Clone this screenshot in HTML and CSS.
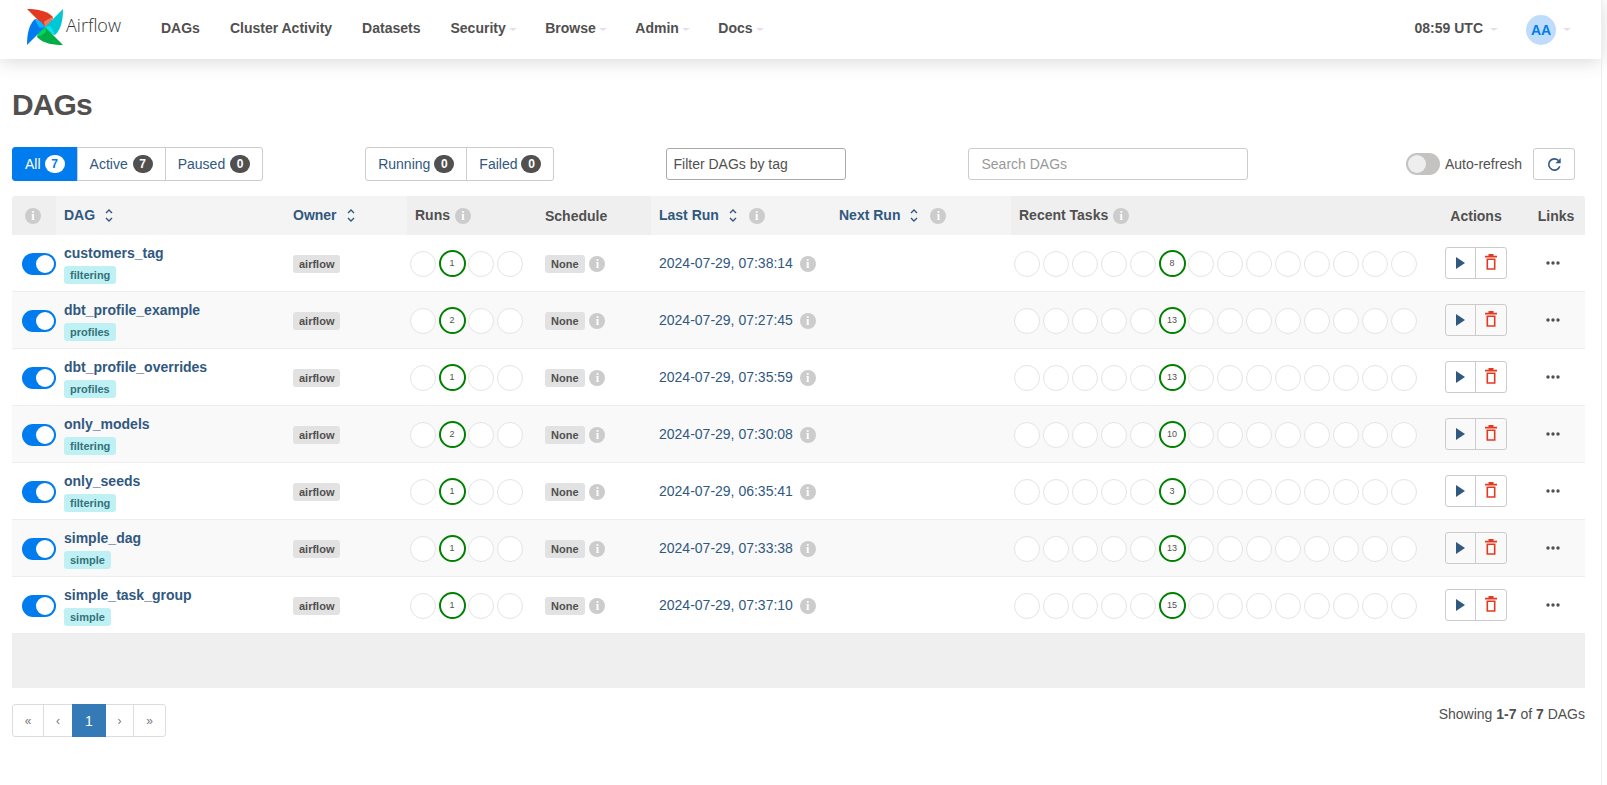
FILE: index.html
```html
<!DOCTYPE html>
<html lang="en">
<head>
<meta charset="utf-8">
<title>DAGs - Airflow</title>
<link rel="stylesheet" href="styles.css">
</head>
<body>
<div class="page">
<nav class="nav">
  <a class="brand">
    <svg class="logo" viewBox="0 0 36 36" width="36" height="36">
      <path fill="#e43921" d="M0 0C8 0 20 1 26 8C25 13 21 16 18 18Z"/>
      <path fill="#f07a5e" d="M26 8C25 13 21 16 18 18L17 13C19 11 23 9 26 8Z"/>
      <path fill="#00c7d4" d="M36 0C36 8 35 20 28 26C23 25 20 21 18 18Z"/>
      <path fill="#11e1ee" d="M28 26C23 25 20 21 18 18L23 17C25 19 27 23 28 26Z"/>
      <path fill="#00ad46" d="M36 36C28 36 16 35 10 28C11 23 15 20 18 18Z"/>
      <path fill="#04d659" d="M10 28C11 23 15 20 18 18L19 23C17 25 13 27 10 28Z"/>
      <path fill="#017cee" d="M0 36C0 28 1 16 8 10C13 11 16 15 18 18Z"/>
      <path fill="#0cb6ff" d="M8 10C13 11 16 15 18 18L13 19C11 17 9 13 8 10Z"/>
    </svg>
    <span class="brand-name">Airflow</span>
  </a>
  <ul class="menu">
    <li>DAGs</li>
    <li>Cluster Activity</li>
    <li>Datasets</li>
    <li class="has-caret">Security</li>
    <li class="has-caret">Browse</li>
    <li class="has-caret">Admin</li>
    <li class="has-caret">Docs</li>
  </ul>
  <div class="nav-right">
    <span class="clock has-caret">08:59 UTC</span>
    <span class="user has-caret"><span class="avatar">AA</span></span>
  </div>
</nav>

<main class="main">
  <h1 class="title">DAGs</h1>
  <div class="toolbar">
    <div class="group group-status">
      <a class="seg seg-on">All <span class="badge badge-on">7</span></a>
      <a class="seg">Active <span class="badge">7</span></a>
      <a class="seg">Paused <span class="badge">0</span></a>
    </div>
    <div class="group group-runs">
      <a class="seg">Running <span class="badge">0</span></a>
      <a class="seg">Failed <span class="badge">0</span></a>
    </div>
    <input class="field field-tag" placeholder="Filter DAGs by tag">
    <input class="field field-search" placeholder="Search DAGs">
    <div class="refresh">
      <span class="switch"><span class="switch-knob"></span></span>
      <span class="refresh-label">Auto-refresh</span>
      <button class="refresh-btn" aria-label="Refresh">
        <svg viewBox="0 0 16 16" width="15" height="15"><path fill="none" stroke="#31587f" stroke-width="1.7" d="M13.6 9.8A6 6 0 1 1 12 3.6"/><path fill="#31587f" d="M14.6 1v5.6H9z"/></svg>
      </button>
    </div>
  </div>

  <div class="table-box">
    <table class="dags">
      <colgroup>
        <col class="c-info"><col class="c-dag"><col class="c-owner"><col class="c-runs"><col class="c-sched"><col class="c-last"><col class="c-next"><col class="c-tasks"><col class="c-act"><col class="c-links">
      </colgroup>
      <thead>
        <tr>
          <th class="th-first"><i class="info">i</i></th>
          <th class="th-sort"><a class="sortable">DAG<svg class="sort" viewBox="0 0 8 15" width="8" height="15"><path d="M1 5l3-3 3 3M1 10l3 3 3-3"/></svg></a></th>
          <th class="th-sort"><a class="sortable">Owner<svg class="sort" viewBox="0 0 8 15" width="8" height="15"><path d="M1 5l3-3 3 3M1 10l3 3 3-3"/></svg></a></th>
          <th>Runs <i class="info">i</i></th>
          <th class="th-plain">Schedule</th>
          <th class="th-sort"><a class="sortable">Last Run<svg class="sort" viewBox="0 0 8 15" width="8" height="15"><path d="M1 5l3-3 3 3M1 10l3 3 3-3"/></svg></a> <i class="info info-far">i</i></th>
          <th class="th-sort"><a class="sortable">Next Run<svg class="sort" viewBox="0 0 8 15" width="8" height="15"><path d="M1 5l3-3 3 3M1 10l3 3 3-3"/></svg></a> <i class="info info-far">i</i></th>
          <th>Recent Tasks <i class="info">i</i></th>
          <th class="th-plain center">Actions</th>
          <th class="th-plain center">Links</th>
        </tr>
      </thead>
      <tbody>
        <tr>
          <td class="td-toggle"><span class="toggle"><span class="toggle-knob"></span></span></td>
          <td class="td-name"><a class="dag-name">customers_tag</a><span class="tag">filtering</span></td>
          <td><span class="label">airflow</span></td>
          <td class="td-dots"><div class="dots"><span class="dot"></span><span class="dot dot-ok">1</span><span class="dot"></span><span class="dot"></span></div></td>
          <td><span class="label">None</span> <i class="info">i</i></td>
          <td><a class="date">2024-07-29, 07:38:14</a> <i class="info info-date">i</i></td>
          <td></td>
          <td class="td-dots"><div class="dots"><span class="dot"></span><span class="dot"></span><span class="dot"></span><span class="dot"></span><span class="dot"></span><span class="dot dot-ok">8</span><span class="dot"></span><span class="dot"></span><span class="dot"></span><span class="dot"></span><span class="dot"></span><span class="dot"></span><span class="dot"></span><span class="dot"></span></div></td>
          <td class="center"><div class="acts"><a class="act act-run"><svg viewBox="0 0 9 12" width="9" height="12"><path fill="#31587f" d="M0 0l9 6-9 6z"/></svg></a><a class="act act-del"><svg viewBox="0 0 12 16" width="12" height="16"><path fill="none" stroke="#e43921" stroke-width="1.6" d="M2.3 5.2h7.4v9.8H2.3zM0 2.6h12"/><path fill="#e43921" d="M3.5 0h5v2h-5z"/></svg></a></div></td>
          <td class="center"><svg class="more" viewBox="0 0 14 4" width="14" height="4"><circle cx="2" cy="2" r="1.7"/><circle cx="7" cy="2" r="1.7"/><circle cx="12" cy="2" r="1.7"/></svg></td>
        </tr>
        <tr>
          <td class="td-toggle"><span class="toggle"><span class="toggle-knob"></span></span></td>
          <td class="td-name"><a class="dag-name">dbt_profile_example</a><span class="tag">profiles</span></td>
          <td><span class="label">airflow</span></td>
          <td class="td-dots"><div class="dots"><span class="dot"></span><span class="dot dot-ok">2</span><span class="dot"></span><span class="dot"></span></div></td>
          <td><span class="label">None</span> <i class="info">i</i></td>
          <td><a class="date">2024-07-29, 07:27:45</a> <i class="info info-date">i</i></td>
          <td></td>
          <td class="td-dots"><div class="dots"><span class="dot"></span><span class="dot"></span><span class="dot"></span><span class="dot"></span><span class="dot"></span><span class="dot dot-ok">13</span><span class="dot"></span><span class="dot"></span><span class="dot"></span><span class="dot"></span><span class="dot"></span><span class="dot"></span><span class="dot"></span><span class="dot"></span></div></td>
          <td class="center"><div class="acts"><a class="act act-run"><svg viewBox="0 0 9 12" width="9" height="12"><path fill="#31587f" d="M0 0l9 6-9 6z"/></svg></a><a class="act act-del"><svg viewBox="0 0 12 16" width="12" height="16"><path fill="none" stroke="#e43921" stroke-width="1.6" d="M2.3 5.2h7.4v9.8H2.3zM0 2.6h12"/><path fill="#e43921" d="M3.5 0h5v2h-5z"/></svg></a></div></td>
          <td class="center"><svg class="more" viewBox="0 0 14 4" width="14" height="4"><circle cx="2" cy="2" r="1.7"/><circle cx="7" cy="2" r="1.7"/><circle cx="12" cy="2" r="1.7"/></svg></td>
        </tr>
        <tr>
          <td class="td-toggle"><span class="toggle"><span class="toggle-knob"></span></span></td>
          <td class="td-name"><a class="dag-name">dbt_profile_overrides</a><span class="tag">profiles</span></td>
          <td><span class="label">airflow</span></td>
          <td class="td-dots"><div class="dots"><span class="dot"></span><span class="dot dot-ok">1</span><span class="dot"></span><span class="dot"></span></div></td>
          <td><span class="label">None</span> <i class="info">i</i></td>
          <td><a class="date">2024-07-29, 07:35:59</a> <i class="info info-date">i</i></td>
          <td></td>
          <td class="td-dots"><div class="dots"><span class="dot"></span><span class="dot"></span><span class="dot"></span><span class="dot"></span><span class="dot"></span><span class="dot dot-ok">13</span><span class="dot"></span><span class="dot"></span><span class="dot"></span><span class="dot"></span><span class="dot"></span><span class="dot"></span><span class="dot"></span><span class="dot"></span></div></td>
          <td class="center"><div class="acts"><a class="act act-run"><svg viewBox="0 0 9 12" width="9" height="12"><path fill="#31587f" d="M0 0l9 6-9 6z"/></svg></a><a class="act act-del"><svg viewBox="0 0 12 16" width="12" height="16"><path fill="none" stroke="#e43921" stroke-width="1.6" d="M2.3 5.2h7.4v9.8H2.3zM0 2.6h12"/><path fill="#e43921" d="M3.5 0h5v2h-5z"/></svg></a></div></td>
          <td class="center"><svg class="more" viewBox="0 0 14 4" width="14" height="4"><circle cx="2" cy="2" r="1.7"/><circle cx="7" cy="2" r="1.7"/><circle cx="12" cy="2" r="1.7"/></svg></td>
        </tr>
        <tr>
          <td class="td-toggle"><span class="toggle"><span class="toggle-knob"></span></span></td>
          <td class="td-name"><a class="dag-name">only_models</a><span class="tag">filtering</span></td>
          <td><span class="label">airflow</span></td>
          <td class="td-dots"><div class="dots"><span class="dot"></span><span class="dot dot-ok">2</span><span class="dot"></span><span class="dot"></span></div></td>
          <td><span class="label">None</span> <i class="info">i</i></td>
          <td><a class="date">2024-07-29, 07:30:08</a> <i class="info info-date">i</i></td>
          <td></td>
          <td class="td-dots"><div class="dots"><span class="dot"></span><span class="dot"></span><span class="dot"></span><span class="dot"></span><span class="dot"></span><span class="dot dot-ok">10</span><span class="dot"></span><span class="dot"></span><span class="dot"></span><span class="dot"></span><span class="dot"></span><span class="dot"></span><span class="dot"></span><span class="dot"></span></div></td>
          <td class="center"><div class="acts"><a class="act act-run"><svg viewBox="0 0 9 12" width="9" height="12"><path fill="#31587f" d="M0 0l9 6-9 6z"/></svg></a><a class="act act-del"><svg viewBox="0 0 12 16" width="12" height="16"><path fill="none" stroke="#e43921" stroke-width="1.6" d="M2.3 5.2h7.4v9.8H2.3zM0 2.6h12"/><path fill="#e43921" d="M3.5 0h5v2h-5z"/></svg></a></div></td>
          <td class="center"><svg class="more" viewBox="0 0 14 4" width="14" height="4"><circle cx="2" cy="2" r="1.7"/><circle cx="7" cy="2" r="1.7"/><circle cx="12" cy="2" r="1.7"/></svg></td>
        </tr>
        <tr>
          <td class="td-toggle"><span class="toggle"><span class="toggle-knob"></span></span></td>
          <td class="td-name"><a class="dag-name">only_seeds</a><span class="tag">filtering</span></td>
          <td><span class="label">airflow</span></td>
          <td class="td-dots"><div class="dots"><span class="dot"></span><span class="dot dot-ok">1</span><span class="dot"></span><span class="dot"></span></div></td>
          <td><span class="label">None</span> <i class="info">i</i></td>
          <td><a class="date">2024-07-29, 06:35:41</a> <i class="info info-date">i</i></td>
          <td></td>
          <td class="td-dots"><div class="dots"><span class="dot"></span><span class="dot"></span><span class="dot"></span><span class="dot"></span><span class="dot"></span><span class="dot dot-ok">3</span><span class="dot"></span><span class="dot"></span><span class="dot"></span><span class="dot"></span><span class="dot"></span><span class="dot"></span><span class="dot"></span><span class="dot"></span></div></td>
          <td class="center"><div class="acts"><a class="act act-run"><svg viewBox="0 0 9 12" width="9" height="12"><path fill="#31587f" d="M0 0l9 6-9 6z"/></svg></a><a class="act act-del"><svg viewBox="0 0 12 16" width="12" height="16"><path fill="none" stroke="#e43921" stroke-width="1.6" d="M2.3 5.2h7.4v9.8H2.3zM0 2.6h12"/><path fill="#e43921" d="M3.5 0h5v2h-5z"/></svg></a></div></td>
          <td class="center"><svg class="more" viewBox="0 0 14 4" width="14" height="4"><circle cx="2" cy="2" r="1.7"/><circle cx="7" cy="2" r="1.7"/><circle cx="12" cy="2" r="1.7"/></svg></td>
        </tr>
        <tr>
          <td class="td-toggle"><span class="toggle"><span class="toggle-knob"></span></span></td>
          <td class="td-name"><a class="dag-name">simple_dag</a><span class="tag">simple</span></td>
          <td><span class="label">airflow</span></td>
          <td class="td-dots"><div class="dots"><span class="dot"></span><span class="dot dot-ok">1</span><span class="dot"></span><span class="dot"></span></div></td>
          <td><span class="label">None</span> <i class="info">i</i></td>
          <td><a class="date">2024-07-29, 07:33:38</a> <i class="info info-date">i</i></td>
          <td></td>
          <td class="td-dots"><div class="dots"><span class="dot"></span><span class="dot"></span><span class="dot"></span><span class="dot"></span><span class="dot"></span><span class="dot dot-ok">13</span><span class="dot"></span><span class="dot"></span><span class="dot"></span><span class="dot"></span><span class="dot"></span><span class="dot"></span><span class="dot"></span><span class="dot"></span></div></td>
          <td class="center"><div class="acts"><a class="act act-run"><svg viewBox="0 0 9 12" width="9" height="12"><path fill="#31587f" d="M0 0l9 6-9 6z"/></svg></a><a class="act act-del"><svg viewBox="0 0 12 16" width="12" height="16"><path fill="none" stroke="#e43921" stroke-width="1.6" d="M2.3 5.2h7.4v9.8H2.3zM0 2.6h12"/><path fill="#e43921" d="M3.5 0h5v2h-5z"/></svg></a></div></td>
          <td class="center"><svg class="more" viewBox="0 0 14 4" width="14" height="4"><circle cx="2" cy="2" r="1.7"/><circle cx="7" cy="2" r="1.7"/><circle cx="12" cy="2" r="1.7"/></svg></td>
        </tr>
        <tr>
          <td class="td-toggle"><span class="toggle"><span class="toggle-knob"></span></span></td>
          <td class="td-name"><a class="dag-name">simple_task_group</a><span class="tag">simple</span></td>
          <td><span class="label">airflow</span></td>
          <td class="td-dots"><div class="dots"><span class="dot"></span><span class="dot dot-ok">1</span><span class="dot"></span><span class="dot"></span></div></td>
          <td><span class="label">None</span> <i class="info">i</i></td>
          <td><a class="date">2024-07-29, 07:37:10</a> <i class="info info-date">i</i></td>
          <td></td>
          <td class="td-dots"><div class="dots"><span class="dot"></span><span class="dot"></span><span class="dot"></span><span class="dot"></span><span class="dot"></span><span class="dot dot-ok">15</span><span class="dot"></span><span class="dot"></span><span class="dot"></span><span class="dot"></span><span class="dot"></span><span class="dot"></span><span class="dot"></span><span class="dot"></span></div></td>
          <td class="center"><div class="acts"><a class="act act-run"><svg viewBox="0 0 9 12" width="9" height="12"><path fill="#31587f" d="M0 0l9 6-9 6z"/></svg></a><a class="act act-del"><svg viewBox="0 0 12 16" width="12" height="16"><path fill="none" stroke="#e43921" stroke-width="1.6" d="M2.3 5.2h7.4v9.8H2.3zM0 2.6h12"/><path fill="#e43921" d="M3.5 0h5v2h-5z"/></svg></a></div></td>
          <td class="center"><svg class="more" viewBox="0 0 14 4" width="14" height="4"><circle cx="2" cy="2" r="1.7"/><circle cx="7" cy="2" r="1.7"/><circle cx="12" cy="2" r="1.7"/></svg></td>
        </tr>
      </tbody>
    </table>
  </div>

  <div class="foot">
    <ul class="pager">
      <li class="pg pg-1">«</li>
      <li class="pg pg-2">‹</li>
      <li class="pg pg-on">1</li>
      <li class="pg pg-4">›</li>
      <li class="pg pg-5">»</li>
    </ul>
    <p class="showing">Showing <b>1-7</b> of <b>7</b> DAGs</p>
  </div>
</main>
</div>
<div class="gutter"></div>
</body>
</html>
```

FILE: styles.css
```css
* { box-sizing: border-box; }
html, body { height: 100%; }
body {
  margin: 0;
  display: flex;
  overflow: hidden;
  background: #fff;
  color: #51504f;
  font: 14px/20px "Liberation Sans", Arial, sans-serif;
}
.page { width: 1601px; flex: none; }
.gutter { flex: 1; border-left: 1px solid #ededed; }

/* navbar */
.nav {
  height: 59px;
  display: flex;
  align-items: center;
  padding: 0 30px 0 27px;
  background: #fff;
  box-shadow: 0 2px 18px rgba(0, 0, 0, .16);
}
.brand { display: flex; align-items: center; width: 119px; height: 59px; }
.logo { flex: none; margin-bottom: 6px; }
.brand-name {
  margin: -9px 0 0 3px;
  font: 300 18px/24px "Open Sans", sans-serif;
  color: #333;
}
.menu {
  display: flex;
  margin: 0 0 4px 0;
  padding: 0;
  list-style: none;
  font-weight: 700;
}
.menu li { padding: 0 15px; }
.has-caret::after {
  content: "";
  display: inline-block;
  margin-left: 3px;
  vertical-align: 2px;
  border-top: 3px solid #e8dde8;
  border-left: 4px solid transparent;
  border-right: 4px solid transparent;
}
.menu .has-caret { padding-right: 13.5px; }
.nav-right { margin-left: auto; display: flex; align-items: center; font-weight: 700; }
.clock { margin-right: 28px; margin-bottom: 4px; }
.clock::after { margin-left: 7px; }
.user { display: flex; align-items: center; }
.user::after { margin-left: 7px; }
.avatar {
  width: 30px;
  height: 30px;
  border-radius: 50%;
  display: flex;
  align-items: center;
  justify-content: center;
  background: #c0dcfb;
  color: #017cee;
  font-size: 14px;
}

/* main */
.main { padding: 0 16px 0 12px; }
.title {
  margin: 0;
  padding-top: 29px;
  font-size: 30px;
  line-height: 33px;
  font-weight: 700;
  letter-spacing: -.9px;
}
.toolbar { display: flex; align-items: flex-start; margin-top: 26px; height: 49px; }
.group { display: flex; height: 34px; }
.group-runs { margin-left: 102px; }
.seg {
  display: flex;
  align-items: center;
  gap: 4px;
  padding: 0 12px;
  border: 1px solid #ccc;
  margin-left: -1px;
  color: #31587f;
  background: #fff;
}
.group-status .seg + .seg { gap: 5px; }
.group .seg:first-child { margin-left: 0; border-radius: 3px 0 0 3px; }
.group .seg:last-child { border-radius: 0 3px 3px 0; }
.seg-on { background: #017cee; border-color: #017cee; color: #fff; }
.badge {
  min-width: 20px;
  height: 18px;
  border-radius: 9px;
  display: inline-flex;
  align-items: center;
  justify-content: center;
  background: #51504f;
  color: #fff;
  font-size: 12px;
  font-weight: 700;
}
.badge-on { background: #fff; color: #017cee; }
.field {
  height: 32px;
  margin-top: 1px;
  padding: 0 12px;
  border-radius: 3px;
  border: 1px solid #ccc;
  font: inherit;
  background: #fff;
}
.field::placeholder { color: #999; opacity: 1; }
.field-tag {
  width: 180px;
  margin-left: 112px;
  padding-left: 6px;
  border-color: #aaa;
}
.field-tag::placeholder { color: #51504f; }
.field-search { width: 280px; margin-left: 122px; }
.refresh { margin-left: auto; margin-right: 10px; display: flex; align-items: center; margin-top: 1px; }
.switch {
  width: 34px;
  height: 22px;
  border-radius: 11px;
  background: #c4c3c2;
  display: flex;
  align-items: center;
  padding-left: 2px;
}
.switch-knob { width: 18px; height: 18px; border-radius: 50%; background: #eee; }
.refresh-label { margin-left: 5px; }
.refresh-btn {
  width: 42px;
  height: 32px;
  margin-left: 11px;
  padding: 0;
  display: flex;
  align-items: center;
  justify-content: center;
  background: #fff;
  border: 1px solid #ccc;
  border-radius: 3px;
}

/* table */
.table-box {
  height: 492px;
  width: 1573px;
  background: #efefef;
  border-radius: 4px 4px 0 0;
  overflow: hidden;
}
.dags { width: 1573px; border-collapse: collapse; table-layout: fixed; }
.c-info { width: 44px; }
.c-dag { width: 229px; }
.c-owner { width: 122px; }
.c-runs { width: 130px; }
.c-sched { width: 114px; }
.c-last { width: 180px; }
.c-next { width: 180px; }
.c-tasks { width: 414px; }
.c-act { width: 102px; }
.c-links { width: 58px; }
th {
  height: 39px;
  padding: 0 8px 2px;
  text-align: left;
  font-weight: 700;
  background: #efefef;
  white-space: nowrap;
}
.th-plain { padding-bottom: 0; }
.th-first { padding-left: 12px; }
.th-sort { background: #f4f4f4; }
.sortable { color: #31587f; }
.sort {
  margin-left: 10px;
  vertical-align: -3px;
  fill: none;
  stroke: #31587f;
  stroke-width: 1.4;
}
th.center, td.center { text-align: center; }
td {
  height: 57px;
  padding: 0 8px;
  vertical-align: middle;
  background: #fff;
  border-bottom: 1px solid #eee;
}
tbody tr:nth-child(even) td { background: #f9f9f9; }
tbody tr:first-child td { height: 56px; }
.info {
  display: inline-block;
  width: 16px;
  height: 16px;
  margin-left: 1px;
  border-radius: 50%;
  background: #ccc;
  color: #fff;
  font: 700 12px/16px "Liberation Serif", serif;
  text-align: center;
  vertical-align: 0;
}
.info-far { margin-left: 8px; }
.info-date { margin-left: 3px; }
.td-toggle { padding: 2px 0 0 10px; }
.toggle {
  width: 34px;
  height: 22px;
  border-radius: 11px;
  background: #017cee;
  display: flex;
  align-items: center;
  justify-content: flex-end;
  padding-right: 2px;
}
.toggle-knob { width: 18px; height: 18px; border-radius: 50%; background: #fff; }
.td-name { padding-top: 2px; }
.dag-name { display: block; color: #31587f; font-weight: 700; line-height: 20px; }
.tag {
  display: inline-block;
  height: 18px;
  margin-top: 3px;
  padding: 0 6px;
  border-radius: 3px;
  background: #bff1f4;
  color: #35717a;
  font-size: 11px;
  font-weight: 700;
  line-height: 18px;
}
.label {
  display: inline-block;
  height: 18px;
  margin-top: 1px;
  padding: 0 6px;
  border-radius: 3px;
  background: #e2e2e2;
  color: #51504f;
  font-size: 11px;
  font-weight: 700;
  line-height: 18px;
}
.date { color: #31587f; }
.td-dots { padding: 2px 0 0 3px; }
.dots { display: flex; align-items: center; }
.dot {
  flex: none;
  width: 26px;
  height: 26px;
  margin-right: 3px;
  border: 1px solid #e4e4e4;
  border-radius: 50%;
  background: #fff;
}
.dot-ok {
  width: 27px;
  height: 27px;
  margin: 0 2.5px 0 -.5px;
  border: 2px solid #008000;
  display: flex;
  align-items: center;
  justify-content: center;
  font-size: 9px;
  line-height: 1;
}
.acts {
  display: inline-flex;
  height: 32px;
  border: 1px solid #ccc;
  border-radius: 3px;
  vertical-align: middle;
}
.act {
  display: flex;
  align-items: center;
  justify-content: center;
}
.act-run { width: 29px; }
.act-del { width: 31px; padding-bottom: 2px; border-left: 1px solid #ccc; }
.more { fill: #51504f; vertical-align: middle; margin: 0 6px 2px 0; }

/* footer */
.foot { display: flex; justify-content: space-between; margin-top: 16px; }
.pager {
  display: flex;
  margin: 0;
  padding: 0;
  list-style: none;
  height: 33px;
  border: 1px solid #ddd;
  border-radius: 3px;
  color: #777;
  font-size: 12px;
}
.pg { display: flex; align-items: center; justify-content: center; border-right: 1px solid #ddd; }
.pg-1 { width: 31px; }
.pg-2 { width: 28px; border-right: 0; }
.pg-on { width: 34px; margin: -1px 0; background: #337ab7; color: #fff; font-size: 14px; border-right: 0; }
.pg-4 { width: 28px; }
.pg-5 { width: 31px; border-right: 0; }
.showing { margin: 0; }
.showing b { font-weight: 700; }
```
